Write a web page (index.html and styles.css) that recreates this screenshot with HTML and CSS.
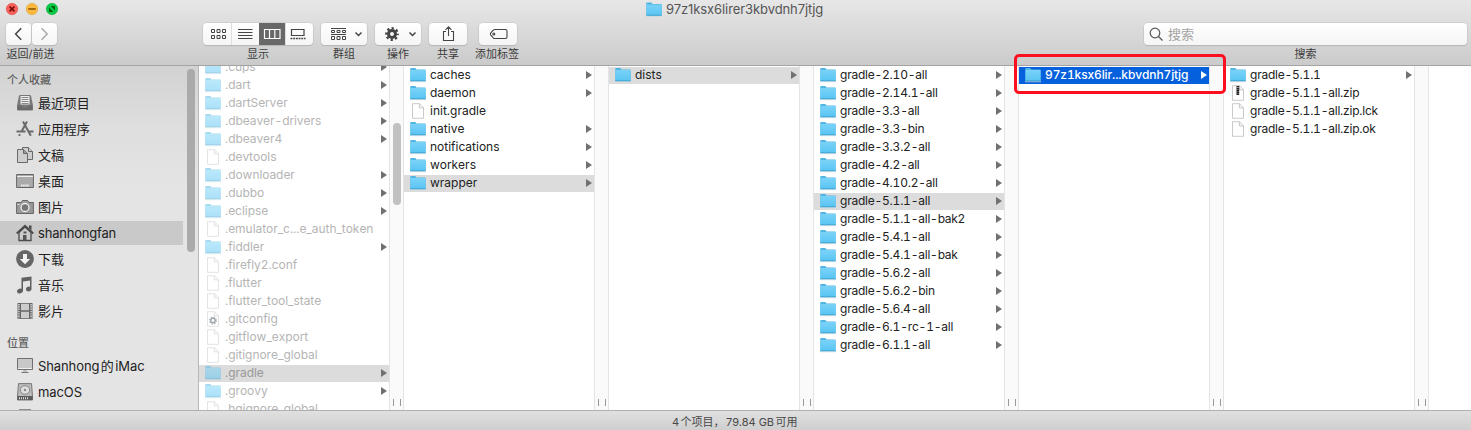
FILE: index.html
```html
<!DOCTYPE html>
<html lang="zh-CN">
<head>
<meta charset="utf-8">
<title>97z1ksx6lirer3kbvdnh7jtjg</title>
<link rel="stylesheet" href="styles.css">
</head>
<body>
<svg class="defs" width="0" height="0">
  <defs>
    <linearGradient id="fg" x1="0" y1="0" x2="0" y2="1"><stop offset="0" stop-color="#77d2f8"/><stop offset="1" stop-color="#5ac4f2"/></linearGradient>
    <symbol id="folder" viewBox="0 0 16 15"><path d="M0 13.8h16v.9H0z" fill="#c9d6dc"/><path d="M.3 13.6V1.200Q.3.6.9.6h4.400l1.200 1.300h8.600q.6 0 .6.6v11.100z" fill="#4fb6e4"/><path d="M.5 3.600h15v9.500H.5z" fill="url(#fg)"/><path d="M.4 13.300h15.200" stroke="#36a0d0" stroke-width=".8"/><path d="M.5 3.100h15" stroke="#8edcfb" stroke-width=".8"/></symbol>
    <symbol id="file" viewBox="0 0 16 16"><path d="M2.500.7h7.200l3.800 3.900v10.700h-11z" fill="#fff" stroke="#bcbcbc" stroke-width=".8"/><path d="M9.400.8v4.100h4.100" fill="#f4f4f4" stroke="#bcbcbc" stroke-width=".8"/></symbol>
    <symbol id="zip" viewBox="0 0 16 16"><use href="#file"/><path d="M7.900 1v9" stroke="#222" stroke-width="2.600" stroke-dasharray="1.600 .3"/><path d="M6.400 1v9" stroke="#777" stroke-width=".6"/></symbol>
    <symbol id="conf" viewBox="0 0 16 16"><use href="#file"/><circle cx="8" cy="9.500" r="2.200" fill="none" stroke="#40545f" stroke-width="1.500"/><circle cx="8" cy="9.500" r="3.400" fill="none" stroke="#40545f" stroke-width="1.200" stroke-dasharray="1.330 1.340"/></symbol>
  </defs>
</svg>
<div class="window">
  <header class="toolbar">
    <div class="titlebar">
      <svg class="lights" width="60" height="14" viewBox="0 0 60 14">
        <circle cx="8" cy="7" r="5.7" fill="#fb605c" stroke="#df4744" stroke-width=".6"/><path d="M5.6 4.6l4.8 4.8M10.4 4.6L5.6 9.4" stroke="#760d09" stroke-width="1.7"/>
        <circle cx="28" cy="7" r="5.7" fill="#fcbb40" stroke="#de9f34" stroke-width=".6"/><path d="M24.2 7h7.6" stroke="#985a08" stroke-width="1.7"/>
        <circle cx="48" cy="7" r="5.7" fill="#06ca48" stroke="#12ac34" stroke-width=".6"/><path d="M46.6 4.1h4.4v4.4zM45 5.6v4.4h4.4z" fill="#06610c"/>
      </svg>
      <div class="title"><svg width="16" height="15"><use href="#folder"/></svg><span>97z1ksx6lirer3kbvdnh7jtjg</span></div>
    </div>
    <div class="tools">
      <div class="tool nav">
        <div class="pair">
          <div class="btn"><svg width="25" height="22"><path d="M15.2 5.3L9.6 11l5.6 5.7" fill="none" stroke="#444" stroke-width="1.5"/></svg></div>
          <div class="btn"><svg width="25" height="22"><path d="M9.6 5.3l5.6 5.7-5.6 5.7" fill="none" stroke="#aaa" stroke-width="1.5"/></svg></div>
        </div>
        <span>返回/前进</span>
      </div>
      <div class="tool view">
        <div class="btn seg">
          <div><svg width="29" height="22" fill="none" stroke="#444"><path d="M8.500 6.500h3v3h-3zM14 6.500h3v3h-3zM19.500 6.500h3v3h-3zM8.500 12.500h3v3h-3zM14 12.500h3v3h-3zM19.500 12.500h3v3h-3z"/></svg></div>
          <div><svg width="27" height="22" stroke="#444"><path d="M6 6.500h14.500M6 9.500h14.500M6 12.500h14.500M6 15.500h14.500"/></svg></div>
          <div class="on"><svg width="27" height="22" fill="none" stroke="#fff" stroke-width="1.200"><path d="M5.500 6.500h15.500v9h-15.500zM10.500 6.500v9M15.800 6.500v9"/></svg></div>
          <div><svg width="27" height="22" fill="none" stroke="#444" stroke-width="1.200"><path d="M5.500 6.500h12.500v6h-12.500z"/><path d="M4.500 15.500h15" stroke-width="1.600" stroke-dasharray="1.900 .8"/></svg></div>
        </div>
        <span>显示</span>
      </div>
      <div class="tool group">
        <div class="btn"><svg width="46" height="22" fill="none" stroke="#444"><path d="M10 5.500h15M10 11.500h15"/><path d="M10.500 7.500h3v2h-3zM16 7.500h3v2h-3zM21.500 7.500h3v2h-3zM10.500 13.500h3v3h-3zM16 13.500h3v3h-3zM21.500 13.500h3v3h-3z"/><path d="M34.500 9.500l3 3 3-3" stroke-width="1.500"/></svg></div>
        <span>群组</span>
      </div>
      <div class="tool action">
        <div class="btn"><svg width="46" height="22" fill="none" stroke="#444"><circle cx="17" cy="11" r="3.500" stroke-width="3"/><circle cx="17" cy="11" r="5.700" stroke-width="2.400" stroke-dasharray="2.240 2.237" stroke-dashoffset="1.100"/><path d="M34.500 9.500l3 3 3-3" stroke-width="1.500"/></svg></div>
        <span>操作</span>
      </div>
      <div class="tool share">
        <div class="btn"><svg width="38" height="22" fill="none" stroke="#444" stroke-width="1.100"><path d="M17 8.500h-2.500v9h10v-9H22M19.500 13V4M16.500 6.800l3-3 3 3"/></svg></div>
        <span>共享</span>
      </div>
      <div class="tool tag">
        <div class="btn"><svg width="38" height="22" fill="none" stroke="#444" stroke-width="1.100"><path d="M16 6.500h10.500q1.500 0 1.500 1.500v6q0 1.500-1.500 1.500H16q-1 0-1.700-.7l-2.500-2.700q-.9-1.100 0-2.200l2.500-2.700q.7-.7 1.700-.7z"/><circle cx="14.800" cy="11" r="1"/></svg></div>
        <span>添加标签</span>
      </div>
      <div class="tool search">
        <div class="btn field"><svg width="15" height="16" fill="none" stroke="#555" stroke-width="1.200"><circle cx="6" cy="7" r="4.800"/><path d="M9.500 10.500l4 4"/></svg><span>搜索</span></div>
        <span>搜索</span>
      </div>
    </div>
  </header>
  <main class="content">
    <nav class="sidebar">
      <h2>个人收藏</h2>
      <ul>
        <li><svg width="18" height="18"><path d="M3 1.500h12l2 10v4q0 1-1 1H2q-1 0-1-1v-4z" fill="#7a7a7a"/><path d="M4 1.500h10v9.500H4z" fill="#eee" stroke="#777"/><path d="M5.500 3.500h7M5.500 5.500h7M5.500 7.500h7M5.500 9.500h7" stroke="#888"/><path d="M1.500 11.500h4l1 2h5l1-2h4v4.500h-15z" fill="#6a6a6a"/></svg>最近项目</li>
        <li><svg width="18" height="18" fill="none" stroke="#6a6a6a" stroke-width="2"><path d="M7 1.500l7.800 14.200M11 1.500L5.500 11.500M4 14.200l-.9 1.700M.5 11.500h9M13 11.500h4.500"/></svg>应用程序</li>
        <li><svg width="18" height="18" fill="#cecece" stroke="#686868"><path d="M6.500 1.500h6l4 4v8h-10z"/><path d="M12.500 1.500v4h4M1.500 3.500h6l4 4v9h-10z"/><path d="M7.500 3.500v4h4" fill="#999"/></svg>文稿</li>
        <li><svg width="18" height="18"><path d="M.6 2.500h16.800v13H.6z" fill="#aaa" stroke="#666"/><path d="M1 4.500h16" stroke="#eee"/><path d="M5 13.500h8" stroke="#eee" stroke-width="2" stroke-dasharray="1.500 .6"/></svg>桌面</li>
        <li><svg width="18" height="18"><path d="M.6 4.500h4.400l1.500-2h5l1.500 2h4.400v11H.6z" fill="#999" stroke="#666"/><circle cx="9" cy="9.500" r="4" fill="#777" stroke="#eee" stroke-width="1.300"/><path d="M1.500 6.500h2" stroke="#ddd"/></svg>图片</li>
        <li class="on"><svg width="18" height="18"><path d="M3 8.500l6-5.500 6 5.500v8H3z" fill="#ccc" stroke="#4b4b4b" stroke-width="1.300"/><path d="M.7 9.500L9 1.700l8.300 7.800" fill="none" stroke="#4b4b4b" stroke-width="1.800"/><path d="M13 1.500h2.500v5L13 4z" fill="#4b4b4b"/><path d="M7.500 7.500h3v2h-3zM7 11h3.500v5.500H7z" fill="#555"/></svg>shanhongfan</li>
        <li><svg width="18" height="18"><circle cx="9" cy="9" r="8.900" fill="#666"/><path d="M7 4h4v5h3.200L9 14.300 3.800 9H7z" fill="#f2f2f2"/></svg>下载</li>
        <li><svg width="18" height="18" fill="#606060"><path d="M5.500 1.700L15.500.4v12h-1.500V4.500L7 5.500v9H5.500z"/><ellipse cx="4" cy="15" rx="3" ry="2.300" transform="rotate(-18 4 15)"/><ellipse cx="12.700" cy="13" rx="2.800" ry="2.300" transform="rotate(-18 12.700 13)"/></svg>音乐</li>
        <li><svg width="18" height="18"><path d="M1.500 1h15v16h-15z" fill="#666"/><path d="M5 1.800h8v6.500H5zM5 9.700h8v6.500H5z" fill="#ccc"/><path d="M2.900 2v14.500M15.100 2v14.500" stroke="#ddd" stroke-width="1.400" stroke-dasharray="1.400 .9"/></svg>影片</li>
      </ul>
      <h2 class="second">位置</h2>
      <ul>
        <li><svg width="18" height="18"><path d="M1.500 1.500h15v11h-15z" fill="#c8c8c8" stroke="#707070"/><path d="M2 11.500h14" stroke="#eee"/><path d="M7.500 13h3l.5 2h-4z" fill="#bbb"/><path d="M5.500 15.500h7" stroke="#777"/></svg><span>Shanhong<span class="han">的</span>iMac</span></li>
        <li><svg width="18" height="18"><path d="M2.500.6h13l1 12.400v4h-15v-4z" fill="#bbb" stroke="#777"/><ellipse cx="9" cy="7" rx="4.700" ry="4.300" fill="#ddd" stroke="#888"/><circle cx="9" cy="7" r="1.200" fill="#888"/><path d="M1.500 13h15v4h-15z" fill="#5c5c5c"/><path d="M3 15.200h9" stroke="#ddd" stroke-width="2" stroke-dasharray="1 1"/></svg>macOS</li>
        <li><svg width="18" height="18"><path d="M3 .2h12v16H3z" fill="#777"/></svg></li>
      </ul>
      <i class="thumb"></i>
    </nav>
    <section class="column hidden">
      <ul>
        <li class="dir"><svg><use href="#folder"/></svg>.cups</li>
        <li class="dir"><svg><use href="#folder"/></svg>.dart</li>
        <li class="dir"><svg><use href="#folder"/></svg>.dartServer</li>
        <li class="dir"><svg><use href="#folder"/></svg>.dbeaver-drivers</li>
        <li class="dir"><svg><use href="#folder"/></svg>.dbeaver4</li>
        <li><svg><use href="#file"/></svg>.devtools</li>
        <li class="dir"><svg><use href="#folder"/></svg>.downloader</li>
        <li class="dir"><svg><use href="#folder"/></svg>.dubbo</li>
        <li class="dir"><svg><use href="#folder"/></svg>.eclipse</li>
        <li><svg><use href="#file"/></svg>.emulator_c...e_auth_token</li>
        <li class="dir"><svg><use href="#folder"/></svg>.fiddler</li>
        <li><svg><use href="#file"/></svg>.firefly2.conf</li>
        <li><svg><use href="#file"/></svg>.flutter</li>
        <li><svg><use href="#file"/></svg>.flutter_tool_state</li>
        <li><svg><use href="#conf"/></svg>.gitconfig</li>
        <li><svg><use href="#file"/></svg>.gitflow_export</li>
        <li><svg><use href="#file"/></svg>.gitignore_global</li>
        <li class="dir sel"><svg><use href="#folder"/></svg>.gradle</li>
        <li class="dir"><svg><use href="#folder"/></svg>.groovy</li>
        <li><svg><use href="#file"/></svg>.hgignore_global</li>
      </ul>
      <div class="gutter"><i class="thumb"></i></div>
    </section>
    <section class="column">
      <ul>
        <li class="dir"><svg><use href="#folder"/></svg>caches</li>
        <li class="dir"><svg><use href="#folder"/></svg>daemon</li>
        <li><svg><use href="#file"/></svg>init.gradle</li>
        <li class="dir"><svg><use href="#folder"/></svg>native</li>
        <li class="dir"><svg><use href="#folder"/></svg>notifications</li>
        <li class="dir"><svg><use href="#folder"/></svg>workers</li>
        <li class="dir sel"><svg><use href="#folder"/></svg>wrapper</li>
      </ul>
      <div class="gutter"></div>
    </section>
    <section class="column">
      <ul>
        <li class="dir sel"><svg><use href="#folder"/></svg>dists</li>
      </ul>
      <div class="gutter"></div>
    </section>
    <section class="column versions">
      <ul>
        <li class="dir"><svg><use href="#folder"/></svg>gradle-2.10-all</li>
        <li class="dir"><svg><use href="#folder"/></svg>gradle-2.14.1-all</li>
        <li class="dir"><svg><use href="#folder"/></svg>gradle-3.3-all</li>
        <li class="dir"><svg><use href="#folder"/></svg>gradle-3.3-bin</li>
        <li class="dir"><svg><use href="#folder"/></svg>gradle-3.3.2-all</li>
        <li class="dir"><svg><use href="#folder"/></svg>gradle-4.2-all</li>
        <li class="dir"><svg><use href="#folder"/></svg>gradle-4.10.2-all</li>
        <li class="dir sel"><svg><use href="#folder"/></svg>gradle-5.1.1-all</li>
        <li class="dir"><svg><use href="#folder"/></svg>gradle-5.1.1-all-bak2</li>
        <li class="dir"><svg><use href="#folder"/></svg>gradle-5.4.1-all</li>
        <li class="dir"><svg><use href="#folder"/></svg>gradle-5.4.1-all-bak</li>
        <li class="dir"><svg><use href="#folder"/></svg>gradle-5.6.2-all</li>
        <li class="dir"><svg><use href="#folder"/></svg>gradle-5.6.2-bin</li>
        <li class="dir"><svg><use href="#folder"/></svg>gradle-5.6.4-all</li>
        <li class="dir"><svg><use href="#folder"/></svg>gradle-6.1-rc-1-all</li>
        <li class="dir"><svg><use href="#folder"/></svg>gradle-6.1.1-all</li>
      </ul>
      <div class="gutter"></div>
    </section>
    <section class="column">
      <ul>
        <li class="dir active"><svg><use href="#folder"/></svg>97z1ksx6lir...kbvdnh7jtjg</li>
      </ul>
      <div class="gutter"></div>
    </section>
    <section class="column versions">
      <ul>
        <li class="dir"><svg><use href="#folder"/></svg>gradle-5.1.1</li>
        <li><svg><use href="#zip"/></svg>gradle-5.1.1-all.zip</li>
        <li><svg><use href="#file"/></svg>gradle-5.1.1-all.zip.lck</li>
        <li><svg><use href="#file"/></svg>gradle-5.1.1-all.zip.ok</li>
      </ul>
      <div class="gutter"></div>
    </section>
  </main>
  <footer class="status">4<span class="han">个项目，</span>79.84 GB<span class="han">可用</span></footer>
  <div class="highlight"></div>
</div>
</body>
</html>
```
FILE: styles.css
```css
* { box-sizing: border-box; }
body { margin: 0; overflow: hidden; font-family: Inter, "Noto Sans CJK SC", sans-serif; font-size: 12px; color: #222; }
ul, h2 { margin: 0; padding: 0; list-style: none; }
svg { display: block; flex: none; }
.defs { position: absolute; }
.window { position: relative; width: 1471px; height: 430px; display: flex; flex-direction: column; background: #fff; }

.toolbar { height: 66px; flex: none; background: linear-gradient(#e7e7e7, #cbcbcb); border-bottom: 1px solid #a3a3a3; }
.titlebar { height: 23px; display: flex; padding: 2px 0 0 4px; }
.title { display: flex; gap: 4px; margin-left: 582px; color: #555; font-size: 13px; line-height: 15px; letter-spacing: -0.09px; font-feature-settings: "calt" 0; white-space: nowrap; }
.tools { display: flex; }
.tool { display: flex; flex-direction: column; align-items: center; font-size: 11px; line-height: 16px; color: #3c3c3c; white-space: nowrap; }
.tool > span { margin-top: 1px; }
.btn { height: 22px; background: linear-gradient(#fff, #f5f5f5); border-radius: 4px; box-shadow: 0 0 0 .5px #c2c2c2, 0 1px 1px #aaa; }
.pair { display: flex; gap: 1px; }
.pair .btn { width: 25px; }
.nav { margin-left: 6px; }
.nav > span { margin-left: -2px; }
.view { margin-left: 146px; width: 110px; }
.seg { display: flex; }
.seg > div + div { box-shadow: -1px 0 #ddd; }
.seg .on { background: #686868; box-shadow: none; }
.group, .action, .share { margin-left: 8px; }
.tag { margin-left: 8px; width: 44px; }
.tag .btn { margin-left: 2px; }
.search { margin-left: 625px; width: 323px; }
.field { width: 323px; display: flex; align-items: center; gap: 4px; padding-left: 5px; font-size: 13px; color: #a4a4a4; }

.content { height: 344px; flex: none; display: flex; overflow: hidden; }
.sidebar { position: relative; flex: none; width: 199px; padding-top: 6px; overflow: hidden; background: linear-gradient(#d2d2d2, #dedede 60px, #e4e4e4 120px); border-right: 1px solid #b8b8b8; font-size: 13px; }
.sidebar h2 { height: 19px; padding-left: 7px; font-size: 11px; font-weight: 500; line-height: 17px; color: #606060; }
.sidebar h2.second { height: 29px; padding-top: 10px; }
.sidebar li { display: flex; align-items: center; gap: 4px; width: 183px; height: 24px; margin-bottom: 2px; padding-left: 16px; line-height: 22px; letter-spacing: -0.1px; white-space: nowrap; }
.sidebar .on { background: #c9c9c9; letter-spacing: -0.2px; }
.han { margin: 0 1.500px; }
.thumb { position: absolute; width: 8px; border-radius: 4px; background: #aaa; }
.sidebar .thumb { left: 187px; top: 3px; height: 183px; }

.column { flex: none; width: 205px; display: flex; }
.column ul { width: 190px; padding-top: 1px; font-kerning: none; font-feature-settings: "tnum" 1, "calt" 0; }
.column li { display: flex; align-items: center; gap: 4px; height: 17px; margin-bottom: 1px; padding: 0 0 2px 6px; line-height: 15px; white-space: nowrap; }
.column li svg { width: 16px; height: 16px; }
.dir::after { content: ""; margin: 1px 2px 0 auto; border-left: 6px solid #717171; border-top: 4px solid transparent; border-bottom: 4px solid transparent; }
.column .sel { background: #dcdcdc; }
.column .active { background: #0560de; color: #fff; font-weight: 500; letter-spacing: -0.12px; }
.column .active::after { border-left-color: #fff; }
.versions ul { letter-spacing: -0.23px; }
.hidden ul { margin-top: -8px; color: #b5b5b5; letter-spacing: -0.05px; }
.hidden svg { opacity: .5; }
.hidden .sel { color: #999; }
.gutter { position: relative; width: 15px; background: #fafafa; border: solid #e4e4e4; border-width: 0 1px; }
.gutter::after { content: ""; position: absolute; left: 3px; bottom: 4px; width: 6px; height: 7px; border: solid #999; border-width: 0 1px; }
.gutter .thumb { left: 3px; top: 57px; height: 82px; background: #c1c1c1; }

.status { height: 20px; flex: none; border-top: 1px solid #b0b0b0; background: linear-gradient(#e0e0e0, #cfcfcf); text-align: center; font-size: 11px; line-height: 22px; color: #484848; }
.highlight { position: absolute; left: 1014px; top: 54px; width: 212px; height: 40px; border: 3px solid #fc1020; border-radius: 5px; }
```
